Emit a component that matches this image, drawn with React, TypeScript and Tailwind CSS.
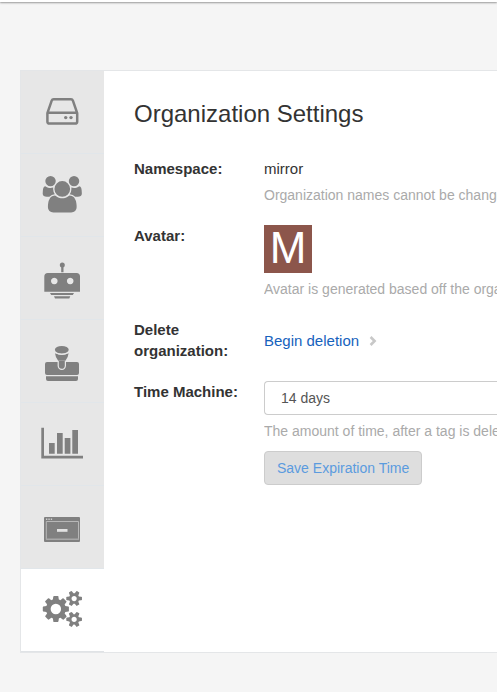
import type { ReactNode } from "react";

const USERS_PATH =
  "M529 896q-162 5-265 128h-134q-82 0-138-40.5t-56-118.5q0-353 124-353 6 0 43.5 21t97.5 42.5 119 21.5q67 0 133-23-5 37-5 66 0 139 81 256zm1071 637q0 120-73 189.5t-194 69.5h-874q-121 0-194-69.5t-73-189.5q0-53 3.5-103.5t14-109 26.5-108.5 43-97.5 62-81 85.5-53.5 111.5-20q10 0 43 21.5t73 48 107 48 135 21.5 135-21.5 107-48 73-48 43-21.5q61 0 111.5 20t85.5 53.5 62 81 43 97.5 26.5 108.5 14 109 3.5 103.5zm-1024-1277q0 106-75 181t-181 75-181-75-75-181 75-181 181-75 181 75 75 181zm704 384q0 159-112.5 271.5t-271.5 112.5-271.5-112.5-112.5-271.5 112.5-271.5 271.5-112.5 271.5 112.5 112.5 271.5zm576 225q0 78-56 118.5t-138 40.5h-134q-103-123-265-128 81-117 81-256 0-29-5-66 66 23 133 23 59 0 119-21.5t97.5-42.5 43.5-21q124 0 124 353zm-128-609q0 106-75 181t-181 75-181-75-75-181 75-181 181-75 181 75 75 181z";

const COGS_PATH =
  "M832 896q0-106-75-181t-181-75-181 75-75 181 75 181 181 75 181-75 75-181zm768 512q0-52-38-90t-90-38-90 38-38 90q0 53 37.5 90.5t90.5 37.5 90.5-37.5 37.5-90.5zm0-1024q0-52-38-90t-90-38-90 38-38 90q0 53 37.5 90.5t90.5 37.5 90.5-37.5 37.5-90.5zm-384 421v185q0 10-7 19.5t-16 10.5l-155 24q-11 35-32 76 34 48 90 115 7 11 7 20 0 12-7 19-23 30-82.5 89.5t-78.5 59.5q-11 0-21-7l-115-90q-37 19-77 31-11 108-23 155-7 24-30 24h-186q-11 0-20-7.5t-10-17.5l-23-153q-34-10-75-31l-118 89q-7 7-20 7-11 0-21-8-144-133-144-160 0-9 7-19 10-14 41-53t47-61q-23-44-35-82l-152-24q-10-1-17-9.5t-7-19.5v-185q0-10 7-19.5t16-10.5l155-24q11-35 32-76-34-48-90-115-7-11-7-20 0-12 7-20 22-30 82-89t79-59q11 0 21 7l115 90q34-18 77-32 11-108 23-154 7-24 30-24h186q11 0 20 7.5t10 17.5l23 153q34 10 75 31l118-89q8-7 20-7 11 0 21 8 144 133 144 160 0 8-7 19-12 16-42 54t-45 60q23 48 34 82l152 23q10 2 17 10.5t7 19.5zm640 533v140q0 16-149 31-12 27-30 52 51 113 51 138 0 4-4 7-122 71-124 71-8 0-46-47t-52-68q-20 2-30 2t-30-2q-14 21-52 68t-46 47q-2 0-124-71-4-3-4-7 0-25 51-138-18-25-30-52-149-15-149-31v-140q0-16 149-31 13-29 30-52-51-113-51-138 0-4 4-7 4-2 35-20t59-34 30-16q8 0 46 46.5t52 67.5q20-2 30-2t30 2q51-71 92-112l6-2q4 0 124 70 4 3 4 7 0 25-51 138 17 23 30 52 149 15 149 31zm0-1024v140q0 16-149 31-12 27-30 52 51 113 51 138 0 4-4 7-122 71-124 71-8 0-46-47t-52-68q-20 2-30 2t-30-2q-14 21-52 68t-46 47q-2 0-124-71-4-3-4-7 0-25 51-138-18-25-30-52-149-15-149-31v-140q0-16 149-31 13-29 30-52-51-113-51-138 0-4 4-7 4-2 35-20t59-34 30-16q8 0 46 46.5t52 67.5q20-2 30-2t30 2q51-71 92-112l6-2q4 0 124 70 4 3 4 7 0 25-51 138 17 23 30 52 149 15 149 31z";

const tabs: { label: string; icon: ReactNode }[] = [
  {
    label: "Repositories",
    icon: (
      <>
        <path
          d="M26.4 42.2 30.7 29.6Q31.2 28.3 32.6 28.3H50Q51.4 28.3 51.9 29.6L56.2 42.2V50.4Q56.2 52.6 54 52.6H28.6Q26.4 52.6 26.4 50.4ZM26.4 41.8H56.2"
          fill="none"
          stroke="currentColor"
          strokeWidth="2.5"
          strokeLinejoin="round"
        />
        <circle cx="44.7" cy="46.6" r="1.7" />
        <circle cx="50" cy="46.6" r="1.7" />
      </>
    ),
  },
  {
    label: "Teams and Membership",
    icon: <path d={USERS_PATH} transform="translate(23 21.9) scale(0.0204)" />,
  },
  {
    label: "Robot Accounts",
    icon: (
      <>
        <circle cx="41.3" cy="27.9" r="2.5" />
        <path d="M40.2 28h2.3v7.2h-2.3zM29 56h24l-1.2 2H30.2zM33 59.2h16.3l-1 2.4H34z" />
        <path
          fillRule="evenodd"
          d="M26.8 36H55.5Q59 36 59 39.5V54.7H23.3V39.5Q23.3 36 26.8 36ZM33.3 40.7a3.3 3.3 0 1 0 .01 0ZM49.2 40.7a3.3 3.3 0 1 0 .01 0Z"
        />
      </>
    ),
  },
  {
    label: "Default Permissions",
    icon: (
      <>
        <path d="M26 42H56Q58 42 58 44V53Q58 55 56 55H26Q24 55 24 53V44Q24 42 26 42ZM25 56.2H57V59Q57 61 55 61H27Q25 61 25 59Z" />
        <path
          d="M37.2 40.5H44.4V45.8a3.6 3.6 0 0 1-7.2 0Z"
          stroke="#e7e7e7"
          strokeWidth="1.2"
        />
        <ellipse cx="40.8" cy="29.7" rx="6.9" ry="3.8" />
        <path d="M34 33.2Q40.8 36.6 47.6 33.2Q47.2 37.2 44.4 40.7H37.2Q34.4 37.2 34 33.2Z" />
        <path d="M34 32.4Q40.8 36.4 47.6 32.4" fill="none" stroke="#e7e7e7" strokeWidth="1" />
      </>
    ),
  },
  {
    label: "Usage Logs",
    icon: (
      <path d="M20.3 24.7H23V52.7H62V55.6H20.3ZM28 40h5.7v10.8H28ZM36 30h5.7v20.8H36ZM43.7 35h5.7v15.8h-5.7ZM51.3 27H57v23.8h-5.7Z" />
    ),
  },
  {
    label: "OAuth Applications",
    icon: (
      <>
        <rect x="23" y="31" width="36" height="25" rx="1" />
        <path d="M25 32.5h1.3v1.5H25zM27.4 32.5h1.3v1.5h-1.3zM29.8 32.5h1.3v1.5h-1.3z" fill="#cfcfcf" />
        <path d="M25.3 53.5V35.5H57.5V53.5" fill="none" stroke="#bdbdbd" strokeWidth="0.9" />
        <path d="M25 53.2H58" stroke="#a8a8a8" strokeWidth="1.5" />
        <rect x="36" y="43" width="10.5" height="2.8" fill="#e2e2e2" />
      </>
    ),
  },
  {
    label: "Organization Settings",
    icon: <path d={COGS_PATH} transform="translate(23.1 21.7) scale(0.0204)" />,
  },
];

function Row({
  label,
  htmlFor,
  center = false,
  children,
}: {
  label: string;
  htmlFor?: string;
  center?: boolean;
  children: ReactNode;
}) {
  const labelClass = "w-[110px] shrink-0 font-bold";
  return (
    <div className={center ? "flex items-center gap-5" : "flex items-start gap-5"}>
      {htmlFor ? (
        <label htmlFor={htmlFor} className={labelClass}>
          {label}
        </label>
      ) : (
        <div className={labelClass}>{label}</div>
      )}
      <div className="min-w-0 flex-1">{children}</div>
    </div>
  );
}

function Help({ children }: { children: ReactNode }) {
  return (
    <p className="mt-1.5 overflow-hidden text-sm leading-5 whitespace-nowrap text-[#aaa]">
      {children}
    </p>
  );
}

export default function App() {
  return (
    <div className="min-h-screen overflow-hidden bg-[#f5f5f5] pb-10 font-['Liberation_Sans',Arial,sans-serif] text-[15px] leading-[21px] text-[#333]">
      <header className="h-0.5 bg-white shadow-[0_1px_2px_rgba(0,0,0,0.4)]" />

      <main className="mt-[68px] ml-5 flex border-y border-l border-[#e4e6e8] bg-white">
        <nav aria-label="Organization" className="flex w-[83px] shrink-0 flex-col bg-[#e7e7e7]">
          {tabs.map((tab, index) => (
            <button
              key={tab.label}
              type="button"
              aria-label={tab.label}
              className={
                index === tabs.length - 1
                  ? "block border-b border-[#e0e3e6] bg-white text-[#808080]"
                  : "block border-b border-[#e1e6ea] text-[#808080]"
              }
            >
              <svg viewBox="0 0 83 82" className="block w-full" fill="currentColor" aria-hidden="true">
                {tab.icon}
              </svg>
            </button>
          ))}
        </nav>

        <section className="min-w-0 flex-1 pt-[27px] pl-[30px]">
          <h1 className="text-2xl leading-8">Organization Settings</h1>

          <div className="mt-7 flex flex-col gap-5">
            <Row label="Namespace:">
              <div>mirror</div>
              <Help>Organization names cannot be changed</Help>
            </Row>

            <Row label="Avatar:">
              <div className="flex size-12 items-center justify-center bg-[#8c564b] pb-0.5 text-[44px] leading-none text-white">
                M
              </div>
              <Help>Avatar is generated based off the organization</Help>
            </Row>

            <Row label="Delete organization:" center>
              <a href="#delete" className="flex items-center gap-2.5 text-[#1662bd]">
                Begin deletion
                <svg viewBox="0 0 8 10" className="mt-0.5 h-2.5 w-2" aria-hidden="true">
                  <path d="M1.6 1 5.6 5 1.6 9" fill="none" stroke="#c8c8c8" strokeWidth="2.6" />
                </svg>
              </a>
            </Row>

            <Row label="Time Machine:" htmlFor="expiration">
              <select
                id="expiration"
                className="block h-[34px] w-full appearance-none rounded-l border border-r-0 border-[#ccc] bg-white px-4 text-sm text-[#555]"
              >
                <option>14 days</option>
              </select>
              <Help>The amount of time, after a tag is deleted</Help>
              <button
                type="button"
                className="mt-2.5 h-[34px] rounded border border-[#ccc] bg-[#dedede] px-3 text-sm text-[#5b9bde]"
              >
                Save Expiration Time
              </button>
            </Row>
          </div>
        </section>
      </main>
    </div>
  );
}
